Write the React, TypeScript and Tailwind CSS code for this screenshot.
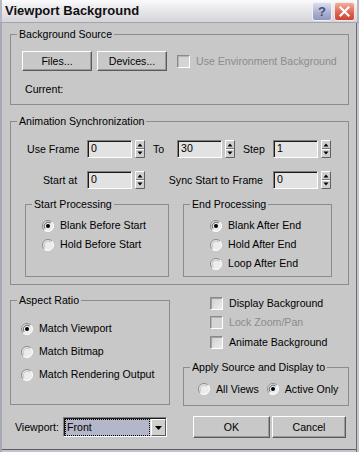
import React from "react";

const FONT = "font-['Liberation_Sans',Arial,sans-serif]";

function Legend({ children }: { children: React.ReactNode }) {
  return (
    <legend className="ml-[6px] px-[2px] text-[10.6px] leading-[13px] text-black">
      {children}
    </legend>
  );
}

function Radio({ checked }: { checked?: boolean }) {
  return (
    <svg width="12" height="12" viewBox="0 0 12 12" className="shrink-0">
      <circle cx="6" cy="6" r="5.5" fill="#ececec" />
      <path d="M2.1 9.9 A5.5 5.5 0 0 1 9.9 2.1" stroke="#8a8a8a" strokeWidth="1" fill="none" />
      <path d="M9.9 2.1 A5.5 5.5 0 0 1 2.1 9.9" stroke="#ffffff" strokeWidth="1" fill="none" />
      <path d="M3 8.6 A4 4 0 0 1 8.6 3" stroke={checked ? "#5a5a5a" : "#c4c4c4"} strokeWidth="1" fill="none" />
      {checked && <circle cx="6" cy="6" r="2" fill="#000" />}
    </svg>
  );
}

function Check({ disabled }: { disabled?: boolean }) {
  return (
    <div
      className={`w-[13px] h-[13px] shrink-0 border border-t-[#8a8a8a] border-l-[#8a8a8a] border-r-white border-b-white ${
        disabled
          ? "bg-[#d4d4d4] shadow-[inset_1px_1px_0_#b4b4b4]"
          : "bg-[linear-gradient(135deg,#cfcfcf,#ececec)] shadow-[inset_1px_1px_0_#a0a0a0]"
      }`}
    />
  );
}

function Spinner() {
  return (
    <svg width="10" height="18" viewBox="0 0 10 18" className="shrink-0">
      <rect x="0" y="0" width="10" height="18" fill="#cfcfcf" />
      <path d="M0.5 17.5V0.5H9.5" stroke="#ffffff" fill="none" />
      <path d="M0.5 17.5H9.5V0.5" stroke="#606060" fill="none" />
      <path d="M1 8.5H9" stroke="#7a7a7a" />
      <path d="M1 9.5H9" stroke="#ffffff" />
      <path d="M5 3.5L7.5 6.5H2.5Z" fill="#000" />
      <path d="M5 14.5L7.5 11.5H2.5Z" fill="#000" />
    </svg>
  );
}

function SpinField({ value }: { value: string }) {
  return (
    <div className="flex items-center gap-[3px]">
      <div className="w-[45px] h-[18px] bg-[#e2e2e2] border border-t-[#808080] border-l-[#808080] border-r-white border-b-white shadow-[inset_1px_1px_0_#1a1a1a] pl-[3px] pt-[1px] leading-[13px]">
        {value}
      </div>
      <Spinner />
    </div>
  );
}

function Btn({ children, className }: { children: React.ReactNode; className?: string }) {
  return (
    <div
      className={`flex items-center justify-center bg-[#c8c8c8] border border-t-white border-l-white border-r-[#5a5a5a] border-b-[#5a5a5a] shadow-[inset_-1px_-1px_0_#9a9a9a] ${className ?? ""}`}
    >
      {children}
    </div>
  );
}

function RadioRow({ checked, label, className }: { checked?: boolean; label: string; className?: string }) {
  return (
    <div className={`flex items-center ${className ?? ""}`}>
      <Radio checked={checked} />
      <span className="ml-[6px]">{label}</span>
    </div>
  );
}

export default function App() {
  return (
    <div className={`w-[359px] h-[452px] flex flex-col bg-[#c8c8c8] text-[10.6px] leading-[13px] text-black ${FONT}`}>
      {/* Title bar */}
      <div className="h-[23px] shrink-0 flex items-center justify-between bg-[linear-gradient(to_bottom,#fbfbfc,#e8e8ec_45%,#d4d4da)] border-b border-[#a4a4ac] shadow-[inset_2px_0_0_#b8b8c4,inset_-2px_0_0_#b8b8c4]">
        <span className="pl-[5px] text-[13px] font-bold leading-[16px] text-[#101010]">Viewport Background</span>
        <div className="flex items-center gap-[2px] pr-[4px]">
          <div className="w-[20px] h-[19px] rounded-[3px] border border-[#f0f0f8] bg-[linear-gradient(to_bottom,#dcdff0,#a9aed0_60%,#9096c0)] flex items-center justify-center text-[13px] font-bold leading-[13px] text-[#4a5070]">
            ?
          </div>
          <div className="w-[21px] h-[19px] rounded-[3px] border border-[#f6e6e6] bg-[linear-gradient(to_bottom,#f0b0a0,#e06650_55%,#c84434)] flex items-center justify-center">
            <svg width="11" height="11" viewBox="0 0 11 11">
              <path d="M1.5 1.5L9.5 9.5M9.5 1.5L1.5 9.5" stroke="#ffffff" strokeWidth="2.2" strokeLinecap="square" />
            </svg>
          </div>
        </div>
      </div>

      {/* Body */}
      <div className="flex-1 flex flex-col shadow-[inset_2px_0_0_#a8a8b4,inset_-2px_0_0_#c4c4cc,inset_-3px_0_0_#6c6c74,inset_0_-2px_0_#c4c4cc,inset_0_-3px_0_#5c5c64]">
        {/* Background Source */}
        <fieldset className="ml-[10px] mt-[5px] w-[339px] h-[77px] border border-[#8c8c8c]">
          <Legend>Background Source</Legend>
          <div className="pl-[11px] pt-[10px] flex flex-col">
            <div className="flex items-center h-[20px]">
              <Btn className="w-[70px] h-[20px]">Files...</Btn>
              <Btn className="ml-[5px] w-[70px] h-[20px]">Devices...</Btn>
              <div className="ml-[10px]">
                <Check disabled />
              </div>
              <span className="ml-[6px] text-[#8c8c8c]">Use Environment Background</span>
            </div>
            <div className="mt-[12px] pl-[3px]">Current:</div>
          </div>
        </fieldset>

        {/* Animation Synchronization */}
        <fieldset className="ml-[10px] mt-[10px] w-[339px] h-[170px] border border-[#8c8c8c]">
          <Legend>Animation Synchronization</Legend>
          <div className="pt-[12px] flex flex-col">
            <div className="flex items-center h-[18px]">
              <div className="w-[76px] pl-[16px]">Use Frame</div>
              <SpinField value="0" />
              <div className="w-[32px] pl-[8px]">To</div>
              <SpinField value="30" />
              <div className="w-[38px] pl-[8px]">Step</div>
              <SpinField value="1" />
            </div>
            <div className="flex items-center h-[18px] mt-[13px]">
              <div className="w-[76px] pl-[32px]">Start at</div>
              <SpinField value="0" />
              <div className="w-[128px] pr-[10px] text-right">Sync Start to Frame</div>
              <SpinField value="0" />
            </div>
            <div className="flex mt-[9px]">
              <fieldset className="ml-[14px] w-[144px] h-[79px] border border-[#8c8c8c]">
                <Legend>Start Processing</Legend>
                <div className="pt-[5px] pl-[16px] flex flex-col">
                  <RadioRow className="h-[19px]" checked label="Blank Before Start" />
                  <RadioRow className="h-[19px]" label="Hold Before Start" />
                </div>
              </fieldset>
              <fieldset className="ml-[14px] w-[149px] h-[79px] border border-[#8c8c8c]">
                <Legend>End Processing</Legend>
                <div className="pt-[5px] pl-[26px] flex flex-col">
                  <RadioRow className="h-[19px]" checked label="Blank After End" />
                  <RadioRow className="h-[19px]" label="Hold After End" />
                  <RadioRow className="h-[19px]" label="Loop After End" />
                </div>
              </fieldset>
            </div>
          </div>
        </fieldset>

        {/* Lower section */}
        <div className="flex mt-[9px]">
          <fieldset className="ml-[10px] w-[160px] h-[111px] border border-[#8c8c8c]">
            <Legend>Aspect Ratio</Legend>
            <div className="pt-[10px] pl-[10px] flex flex-col">
              <RadioRow className="h-[23px]" checked label="Match Viewport" />
              <RadioRow className="h-[23px]" label="Match Bitmap" />
              <RadioRow className="h-[23px]" label="Match Rendering Output" />
            </div>
          </fieldset>
          <div className="ml-[13px] w-[166px] flex flex-col">
            <div className="flex items-center h-[18px] pl-[27px]">
              <Check />
              <span className="ml-[6px]">Display Background</span>
            </div>
            <div className="flex items-center h-[20px] pl-[27px]">
              <Check disabled />
              <span className="ml-[6px] text-[#8c8c8c]">Lock Zoom/Pan</span>
            </div>
            <div className="flex items-center h-[20px] pl-[27px]">
              <Check />
              <span className="ml-[6px]">Animate Background</span>
            </div>
            <fieldset className="mt-[9px] w-[166px] h-[45px] border border-[#8c8c8c]">
              <Legend>Apply Source and Display to</Legend>
              <div className="pt-[6px] pl-[14px] flex items-center h-[24px]">
                <RadioRow label="All Views" />
                <RadioRow className="ml-[8px]" checked label="Active Only" />
              </div>
            </fieldset>
          </div>
        </div>

        {/* Bottom row */}
        <div className="mt-[10px] flex items-center h-[22px]">
          <span className="ml-[15px] w-[48px]">Viewport:</span>
          <div className="w-[104px] h-[20px] flex border border-t-[#808080] border-l-[#808080] border-r-white border-b-white shadow-[inset_1px_1px_0_#1a1a1a] bg-[#e2e2e2] pt-[1px] pl-[1px]">
            <div className="flex-1 h-[17px] bg-[#b4b7ca] border border-dotted border-black pl-[1px] leading-[14px]">
              Front
            </div>
            <div className="ml-[1px] w-[15px] h-[17px] flex items-center justify-center bg-[#cfcfcf] border border-t-white border-l-white border-r-[#5a5a5a] border-b-[#5a5a5a]">
              <svg width="7" height="4" viewBox="0 0 7 4">
                <path d="M0 0H7L3.5 4Z" fill="#000" />
              </svg>
            </div>
          </div>
          <Btn className="ml-[26px] w-[77px] h-[22px]">OK</Btn>
          <Btn className="ml-[2px] w-[74px] h-[22px]">Cancel</Btn>
        </div>
      </div>
    </div>
  );
}
